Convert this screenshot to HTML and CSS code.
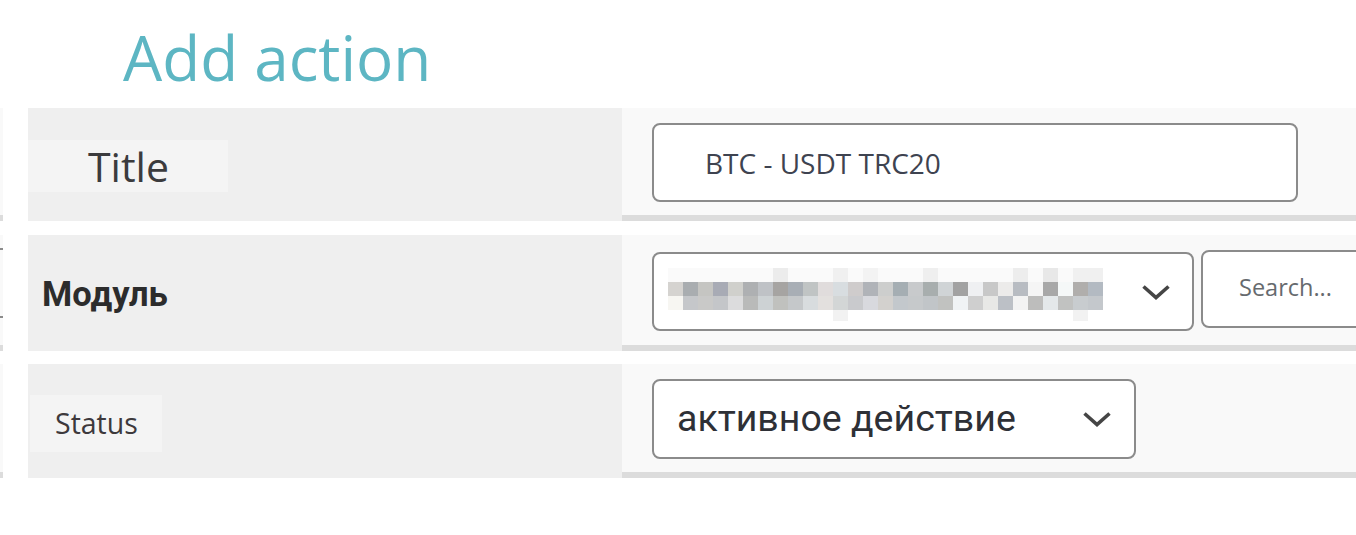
FILE: index.html
```html
<!DOCTYPE html>
<html lang="en">
<head>
<meta charset="utf-8">
<title>Add action</title>
<link rel="stylesheet" href="styles.css">
</head>
<body>
<h1 class="page-title">Add action</h1>
<div class="form">
  <div class="row row--title">
    <div class="edge"></div>
    <div class="label"><span class="label-box label-box--title">Title</span></div>
    <div class="value">
      <div class="field field--text">BTC - USDT TRC20</div>
    </div>
  </div>
  <div class="row row--module">
    <div class="edge edge--ticks"></div>
    <div class="label"><span class="label-strong">Модуль</span></div>
    <div class="value">
      <div class="field field--select field--module">
        <svg class="blur" width="435" height="53" viewBox="0 0 435 53" aria-hidden="true">
          <g>
            <rect x="0" y="0" width="435" height="14" fill="#fafafa"/>
            <rect x="105" y="0" width="15" height="14" fill="#ececec"/>
            <rect x="165" y="0" width="15" height="14" fill="#f0f0f0"/>
            <rect x="195" y="0" width="15" height="14" fill="#f3f3f3"/>
            <rect x="255" y="0" width="15" height="14" fill="#efefef"/>
            <rect x="345" y="0" width="15" height="14" fill="#ededed"/>
            <rect x="375" y="0" width="15" height="14" fill="#e8e8e8"/>
            <rect x="405" y="0" width="30" height="14" fill="#f0f0f0"/>
          </g>
          <g>
            <rect x="0" y="14" width="15" height="14" fill="#d5d3d0"/>
            <rect x="15" y="14" width="15" height="14" fill="#a9adb0"/>
            <rect x="30" y="14" width="15" height="14" fill="#c5c5c2"/>
            <rect x="45" y="14" width="15" height="14" fill="#a8abb5"/>
            <rect x="60" y="14" width="15" height="14" fill="#d0d0cc"/>
            <rect x="75" y="14" width="15" height="14" fill="#aeb0b2"/>
            <rect x="90" y="14" width="15" height="14" fill="#bfc2c6"/>
            <rect x="105" y="14" width="15" height="14" fill="#a6a4a2"/>
            <rect x="120" y="14" width="15" height="14" fill="#a8aeb5"/>
            <rect x="135" y="14" width="15" height="14" fill="#c0c4c4"/>
            <rect x="150" y="14" width="15" height="14" fill="#e0dcdc"/>
            <rect x="165" y="14" width="15" height="14" fill="#d8dde0"/>
            <rect x="180" y="14" width="15" height="14" fill="#cfcccc"/>
            <rect x="195" y="14" width="15" height="14" fill="#b0b3b8"/>
            <rect x="210" y="14" width="15" height="14" fill="#cdcecd"/>
            <rect x="225" y="14" width="15" height="14" fill="#a5aeb3"/>
            <rect x="240" y="14" width="15" height="14" fill="#c8cacc"/>
            <rect x="255" y="14" width="15" height="14" fill="#a8aeae"/>
            <rect x="270" y="14" width="15" height="14" fill="#d0d4d6"/>
            <rect x="285" y="14" width="15" height="14" fill="#a2a2a2"/>
            <rect x="300" y="14" width="15" height="14" fill="#eff0f2"/>
            <rect x="315" y="14" width="15" height="14" fill="#c8c8c8"/>
            <rect x="330" y="14" width="15" height="14" fill="#ecebea"/>
            <rect x="345" y="14" width="15" height="14" fill="#b8bcc2"/>
            <rect x="360" y="14" width="15" height="14" fill="#f5f5f5"/>
            <rect x="375" y="14" width="15" height="14" fill="#a8a8a8"/>
            <rect x="390" y="14" width="15" height="14" fill="#f5f8f8"/>
            <rect x="405" y="14" width="15" height="14" fill="#b0aeac"/>
            <rect x="420" y="14" width="15" height="14" fill="#b3bac2"/>
          </g>
          <g>
            <rect x="0" y="28" width="15" height="14" fill="#f7f6f2"/>
            <rect x="15" y="28" width="15" height="14" fill="#c5c7ca"/>
            <rect x="30" y="28" width="15" height="14" fill="#c9c9c8"/>
            <rect x="45" y="28" width="15" height="14" fill="#c4c6c9"/>
            <rect x="60" y="28" width="15" height="14" fill="#dcdcdd"/>
            <rect x="75" y="28" width="15" height="14" fill="#b9bab9"/>
            <rect x="90" y="28" width="15" height="14" fill="#cdd2d4"/>
            <rect x="105" y="28" width="15" height="14" fill="#c0c1be"/>
            <rect x="120" y="28" width="15" height="14" fill="#c5c8ca"/>
            <rect x="135" y="28" width="15" height="14" fill="#d8dcde"/>
            <rect x="150" y="28" width="15" height="14" fill="#e3e0de"/>
            <rect x="165" y="28" width="15" height="14" fill="#d3d6d6"/>
            <rect x="180" y="28" width="15" height="14" fill="#c9cacd"/>
            <rect x="195" y="28" width="15" height="14" fill="#d8d9de"/>
            <rect x="210" y="28" width="15" height="14" fill="#d3d1ce"/>
            <rect x="225" y="28" width="15" height="14" fill="#c3c8cc"/>
            <rect x="240" y="28" width="15" height="14" fill="#c6c9cb"/>
            <rect x="255" y="28" width="15" height="14" fill="#c1c5c8"/>
            <rect x="270" y="28" width="15" height="14" fill="#c1c2c0"/>
            <rect x="285" y="28" width="15" height="14" fill="#f0f3f5"/>
            <rect x="300" y="28" width="15" height="14" fill="#cfcfcf"/>
            <rect x="315" y="28" width="15" height="14" fill="#e8e8e6"/>
            <rect x="330" y="28" width="15" height="14" fill="#bcc0c6"/>
            <rect x="345" y="28" width="15" height="14" fill="#f3f3f3"/>
            <rect x="360" y="28" width="15" height="14" fill="#bdbdbc"/>
            <rect x="375" y="28" width="15" height="14" fill="#e4e8ea"/>
            <rect x="390" y="28" width="15" height="14" fill="#c1c2c1"/>
            <rect x="405" y="28" width="15" height="14" fill="#c8cccf"/>
            <rect x="420" y="28" width="15" height="14" fill="#c4c8cc"/>
          </g>
          <g>
            <rect x="165" y="42" width="15" height="11" fill="#f2f2f2"/>
            <rect x="405" y="42" width="15" height="11" fill="#f2f2f2"/>
          </g>
        </svg>
        <svg class="chevron" width="30" height="16" viewBox="0 0 30 16" aria-hidden="true"><polyline points="2.5,2.5 15,13.5 27.5,2.5" fill="none" stroke="#454545" stroke-width="3.6"/></svg>
      </div>
      <div class="field field--search"><span class="placeholder">Search...</span></div>
    </div>
  </div>
  <div class="row row--status">
    <div class="edge"></div>
    <div class="label"><span class="label-box label-box--status">Status</span></div>
    <div class="value">
      <div class="field field--select field--status">
        <span class="select-text">активное действие</span>
        <svg class="chevron" width="30" height="16" viewBox="0 0 30 16" aria-hidden="true"><polyline points="2.5,2.5 15,13.5 27.5,2.5" fill="none" stroke="#454545" stroke-width="3.6"/></svg>
      </div>
    </div>
  </div>
</div>
</body>
</html>
```

FILE: styles.css
```css
* {
  box-sizing: border-box;
}

html, body {
  margin: 0;
  padding: 0;
  background: #ffffff;
  overflow: hidden;
}

body {
  width: 1356px;
  height: 535px;
  font-family: "Open Sans", "Noto Sans", sans-serif;
}

.page-title {
  margin: 0;
  padding: 14px 0 0 123px;
  height: 108px;
  font-family: "Open Sans", sans-serif;
  font-weight: 400;
  font-size: 62px;
  line-height: 86px;
  color: #5db6c3;
}

.form {
  display: flex;
  flex-direction: column;
  gap: 14px;
}

.row {
  display: flex;
  height: 113px;
}

.row--module {
  height: 116px;
  margin-bottom: -1px;
}

.row--status {
  height: 114px;
}

.edge {
  width: 3px;
  background: #f9f9f9;
  border-bottom: 6px solid #dcdcdc;
}

.edge--ticks {
  padding-top: 13px;
}

.edge--ticks::before,
.edge--ticks::after {
  content: "";
  display: block;
  height: 2px;
  background: #8b8b8b;
}

.edge--ticks::after {
  margin-top: 66px;
}

.label {
  margin-left: 25px;
  width: 594px;
  background: #efefef;
  display: flex;
  align-items: center;
}

.label-box {
  display: flex;
  align-items: center;
  background: #f4f4f4;
  color: #3b3b3d;
  font-family: "Open Sans", sans-serif;
}

.label-box--title {
  width: 200px;
  height: 52px;
  margin-top: 3px;
  padding-left: 60px;
  font-size: 41px;
}

.label-box--status {
  margin-left: 2px;
  width: 132px;
  height: 57px;
  margin-top: 4px;
  padding-left: 25px;
  font-size: 28.5px;
  color: #3d393c;
}

.label-strong {
  padding-left: 14px;
  margin-top: 2px;
  font-family: Roboto, "Liberation Sans", sans-serif;
  font-weight: 700;
  font-size: 34.5px;
  color: #2c2c2c;
}

.value {
  flex: 1;
  display: flex;
  align-items: flex-start;
  gap: 7px;
  padding: 15px 0 0 30px;
  background: #f9f9f9;
  border-bottom: 6px solid #dcdcdc;
  overflow: hidden;
}

.field {
  flex: none;
  background: #ffffff;
  border: 2px solid #8b8b8b;
  border-radius: 8px;
  display: flex;
  align-items: center;
}

.field--text {
  width: 646px;
  height: 79px;
  padding-left: 51px;
  font-family: "Open Sans", sans-serif;
  font-size: 28px;
  color: #3e4350;
}

.field--select {
  justify-content: space-between;
}

.field--module {
  width: 542px;
  height: 79px;
  margin-top: 2px;
  padding: 0 21px 0 14px;
}

.field--module .blur {
  display: block;
  margin-top: 5px;
}

.field--search {
  width: 170px;
  height: 78px;
  padding-left: 36px;
}

.placeholder {
  font-family: "Open Sans", sans-serif;
  font-size: 23.5px;
  color: #666a6e;
  margin-top: -5px;
}

.field--status {
  width: 484px;
  height: 80px;
  padding: 0 22px 0 23px;
}

.select-text {
  font-family: Roboto, "Liberation Sans", sans-serif;
  font-size: 37.5px;
  color: #2e3036;
  margin-top: -2px;
}

.chevron {
  display: block;
  flex: none;
}
```
